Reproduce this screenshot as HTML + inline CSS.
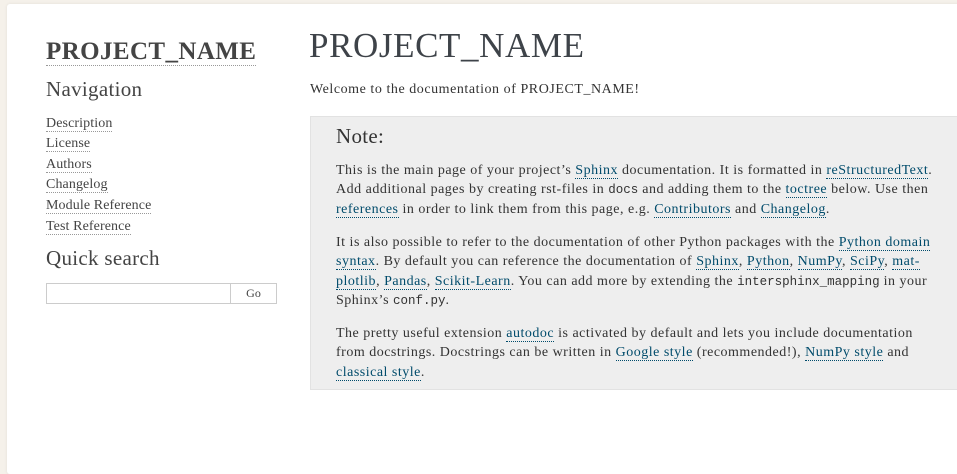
<!DOCTYPE html>
<html><head><meta charset="utf-8"><style>
html,body{margin:0;padding:0;}
body{width:957px;height:453px;overflow:hidden;background:#f5f1ea;font-family:"Liberation Serif",serif;color:#3e4349;position:relative;}
.card{position:absolute;left:7px;top:4px;width:970px;height:470px;background:#fff;border-radius:3px;box-shadow:0 0 3px rgba(0,0,0,.08);}
.abs{position:absolute;white-space:nowrap;}
a{color:#004b6b;text-decoration:none;border-bottom:1px dotted #004b6b;}
.side a{color:#444;border-bottom:1px dotted #999;}
.nav{font-size:14px;letter-spacing:.1px;}
.note{position:absolute;left:310px;top:116px;width:660px;height:272px;background:#eee;border:1px solid #e2e2e2;}
.p{position:absolute;left:25px;font-size:14px;letter-spacing:.5px;white-space:nowrap;color:#333;}
code{font-family:"Liberation Mono",monospace;font-size:12.5px;letter-spacing:0;}
</style></head><body>
<div class="card"></div>
<div class="side">
<div class="abs" style="left:46px;top:38px;font-size:25px;font-weight:bold;letter-spacing:.4px;"><a style="color:#444;border-bottom:1px dotted #999;">PROJECT_NAME</a></div>
<div class="abs" style="left:46px;top:77px;font-size:21px;color:#444;letter-spacing:.3px;">Navigation</div>
<div class="abs nav" style="left:46px;top:116px;"><a>Description</a></div>
<div class="abs nav" style="left:46px;top:136px;"><a>License</a></div>
<div class="abs nav" style="left:46px;top:157px;"><a>Authors</a></div>
<div class="abs nav" style="left:46px;top:177px;"><a>Changelog</a></div>
<div class="abs nav" style="left:46px;top:198px;"><a>Module Reference</a></div>
<div class="abs nav" style="left:46px;top:219px;"><a>Test Reference</a></div>
<div class="abs" style="left:46px;top:246px;font-size:21px;color:#444;letter-spacing:.3px;">Quick search</div>
<div class="abs" style="left:46px;top:283px;width:183px;height:19px;border:1px solid #ccc;border-right:none;"></div>
<div class="abs" style="left:230px;top:283px;width:45px;height:19px;border:1px solid #ccc;font-size:12px;text-align:center;line-height:19px;color:#444;">Go</div>
</div>
<div class="abs" style="left:309px;top:26px;font-size:35px;letter-spacing:.6px;color:#3e4349;">PROJECT_NAME</div>
<div class="abs" style="left:310px;top:82px;font-size:14px;letter-spacing:.55px;color:#333;">Welcome to the documentation of PROJECT_NAME!</div>
<div class="note">
<div class="p" style="top:7px;font-size:21px;letter-spacing:.3px;">Note:</div>
<div class="p" style="top:46px;">This is the main page of your project’s <a>Sphinx</a> documentation. It is formatted in <a>reStructuredText</a>.</div>
<div class="p" style="top:65px;">Add additional pages by creating rst-files in <code>docs</code> and adding them to the <a>toctree</a> below. Use then</div>
<div class="p" style="top:85px;"><a>references</a> in order to link them from this page, e.g. <a>Contributors</a> and <a>Changelog</a>.</div>
<div class="p" style="top:118px;">It is also possible to refer to the documentation of other Python packages with the <a>Python domain</a></div>
<div class="p" style="top:137px;"><a>syntax</a>. By default you can reference the documentation of <a>Sphinx</a>, <a>Python</a>, <a>NumPy</a>, <a>SciPy</a>, <a>mat-</a></div>
<div class="p" style="top:157px;"><a>plotlib</a>, <a>Pandas</a>, <a>Scikit-Learn</a>. You can add more by extending the <code>intersphinx_mapping</code> in your</div>
<div class="p" style="top:176px;">Sphinx’s <code>conf.py</code>.</div>
<div class="p" style="top:209px;">The pretty useful extension <a>autodoc</a> is activated by default and lets you include documentation</div>
<div class="p" style="top:228px;">from docstrings. Docstrings can be written in <a>Google style</a> (recommended!), <a>NumPy style</a> and</div>
<div class="p" style="top:248px;"><a>classical style</a>.</div>
</div>
</body></html>
